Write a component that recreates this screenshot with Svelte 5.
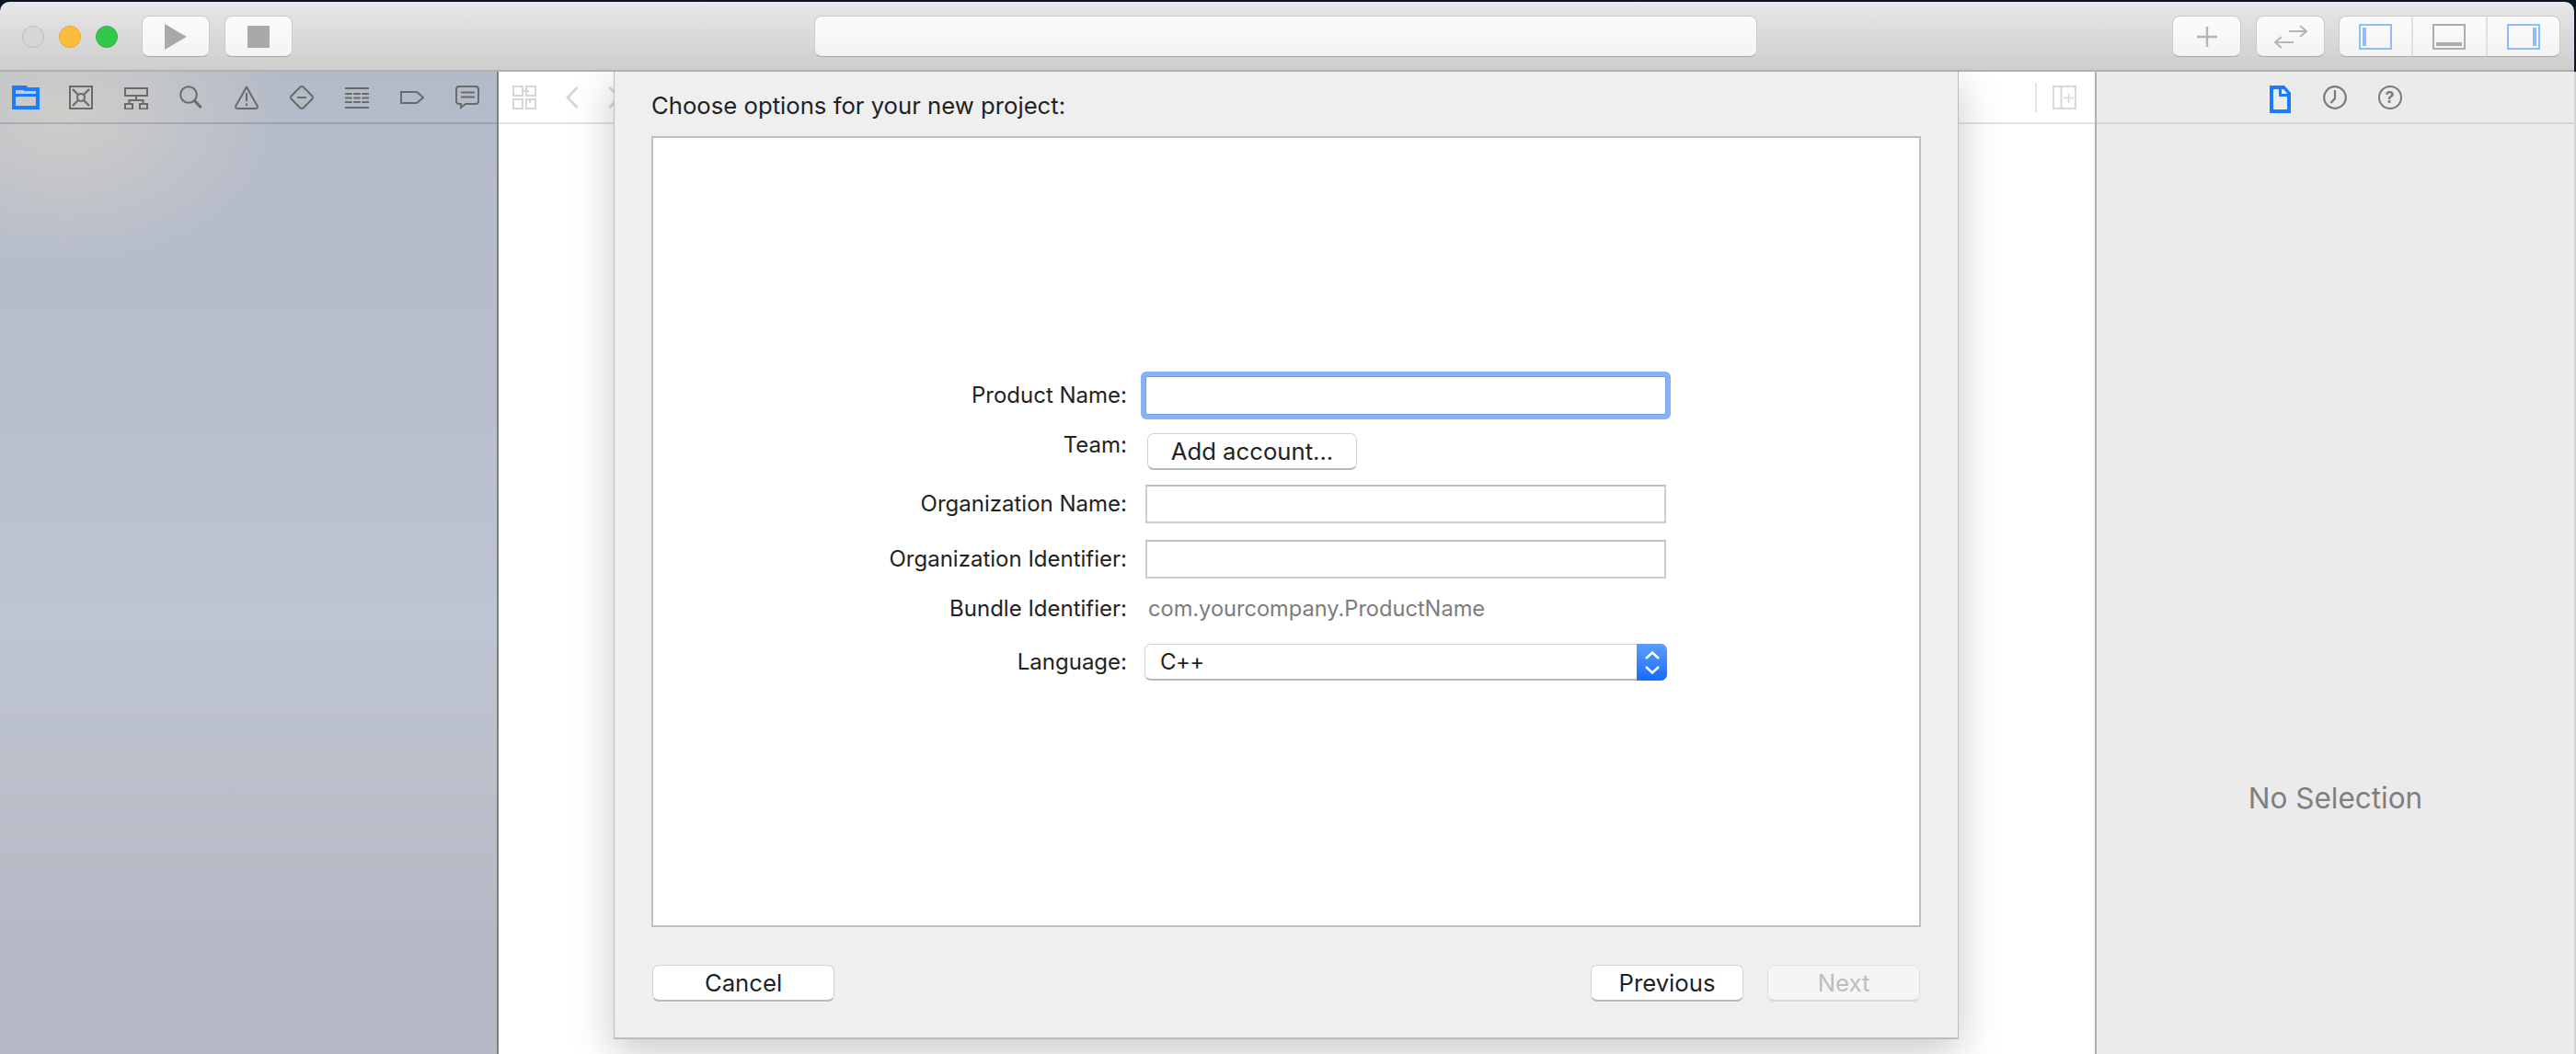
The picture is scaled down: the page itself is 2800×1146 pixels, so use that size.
<script>
  const rows = [
    { label: 'Organization Name:' },
    { label: 'Organization Identifier:' }
  ];
</script>

<div class="app">
  <div class="window">
    <header class="toolbar">
      <div class="lights">
        <span class="light gray"></span>
        <span class="light yellow"></span>
        <span class="light green"></span>
      </div>
      <button class="tb run"><svg width="24" height="28" viewBox="0 0 24 28"><path d="M0 0L24 14L0 28Z" fill="#a9a9a9"/></svg></button>
      <button class="tb stop"><svg width="24" height="24" viewBox="0 0 24 24"><rect width="24" height="24" fill="#a9a9a9"/></svg></button>
      <div class="tb activity"></div>
      <button class="tb add"><svg width="22" height="22" viewBox="0 0 22 22"><path d="M11 0V22M0 11H22" stroke="#b5b5b5" stroke-width="2.4" fill="none"/></svg></button>
      <button class="tb swap"><svg width="36" height="26" viewBox="0 0 36 26" fill="none" stroke="#b5b5b5" stroke-width="2"><path d="M16 7H34M28 1L35 7L28 13M21 19H2M8 13L1 19L8 25"/></svg></button>
      <div class="tb group">
        <span class="seg"><svg width="36" height="28" viewBox="0 0 36 28"><rect x="1" y="1" width="34" height="26" fill="none" stroke="#8dbdfb" stroke-width="2"/><rect x="4" y="4" width="4" height="20" fill="#8dbdfb"/></svg></span>
        <span class="seg"><svg width="36" height="28" viewBox="0 0 36 28"><rect x="1" y="1" width="34" height="26" fill="none" stroke="#adadad" stroke-width="2"/><rect x="4" y="20" width="28" height="4" fill="#adadad"/></svg></span>
        <span class="seg"><svg width="36" height="28" viewBox="0 0 36 28"><rect x="1" y="1" width="34" height="26" fill="none" stroke="#8dbdfb" stroke-width="2"/><rect x="28" y="4" width="4" height="20" fill="#8dbdfb"/></svg></span>
      </div>
    </header>

    <main class="main">
      <aside class="sidebar">
        <nav class="tabs nav-tabs">
          <svg class="folder" width="30" height="26" viewBox="0 0 30 26"><path fill="#1b7cff" fill-rule="evenodd" d="M0 0H16L17 2H30V26H0ZM4 6V9H26V6H13L12 5H4ZM4 12V22H26V12Z"/><path fill="#c3c9d6" d="M4 5H12L13 6H26V9H4Z"/></svg>
          <svg width="26" height="26" viewBox="0 0 26 26" fill="none" stroke="#6a6a6a" stroke-width="2"><rect x="1" y="1" width="24" height="24"/><circle cx="13" cy="13" r="4"/><path d="M4 4L10 10M22 4L16 10M4 22L10 16M22 22L16 16" stroke-width="2.2"/></svg>
          <svg width="26" height="26" viewBox="0 0 26 26" fill="none" stroke="#6a6a6a" stroke-width="2"><rect x="1" y="3" width="24" height="8"/><path d="M13 11V16M5.500 20V16H20.500V20"/><rect x="1" y="20" width="8" height="5.500"/><rect x="17" y="20" width="8" height="5.500"/></svg>
          <svg width="26" height="26" viewBox="0 0 26 26" fill="none" stroke="#6a6a6a" stroke-width="2"><circle cx="10" cy="10" r="8.800"/><path d="M16 16L23.500 24" stroke-width="3"/></svg>
          <svg width="26" height="26" viewBox="0 0 26 26" fill="none" stroke="#6a6a6a" stroke-width="2"><path d="M13 1.500L24.800 22.500Q25 25 23 25H3Q1 25 1.200 22.500Z" stroke-linejoin="round"/><path d="M13 8V17M13 19.500V22"/></svg>
          <svg width="26" height="26" viewBox="0 0 26 26" fill="none" stroke="#6a6a6a" stroke-width="2"><path d="M11 2Q13 0 15 2L24 11Q26 13 24 15L15 24Q13 26 11 24L2 15Q0 13 2 11Z"/><path d="M8 13H18"/></svg>
          <svg width="26" height="26" viewBox="0 0 26 26" fill="none" stroke="#6a6a6a" stroke-width="2"><path d="M0 3H26M0 9H26M0 13.500H26M0 18H26M0 24H26"/><path d="M8.500 7.500V19.500M17.500 7.500V19.500" stroke="#b9c0cd" stroke-width="1.500"/></svg>
          <svg width="26" height="26" viewBox="0 0 26 26" fill="none" stroke="#6a6a6a" stroke-width="2"><path d="M1 7H18L25 13L18 19H1Z"/></svg>
          <svg width="26" height="26" viewBox="0 0 26 26" fill="none" stroke="#6a6a6a" stroke-width="2"><path d="M4 1H22Q25 1 25 4V17Q25 20 22 20H11L6 24V20H4Q1 20 1 17V4Q1 1 4 1Z"/><path d="M6 7.500H21M6 12.500H21"/></svg>
        </nav>
      </aside>

      <section class="editor">
        <div class="editor-bar">
          <svg width="26" height="26" viewBox="0 0 26 26" fill="none" stroke="#d6d6d6" stroke-width="2"><rect x="1" y="1" width="10" height="10"/><rect x="15" y="1" width="10" height="10"/><rect x="1" y="15" width="10" height="10"/><rect x="15" y="15" width="10" height="10"/><path d="M11 6H18M19 15V19"/></svg>
          <svg class="chev" width="14" height="24" viewBox="0 0 14 24" fill="none" stroke="#d8d8d8" stroke-width="3"><path d="M12.500 1L2 12L12.500 23"/></svg>
          <svg class="chev next" width="14" height="24" viewBox="0 0 14 24" fill="none" stroke="#d8d8d8" stroke-width="3"><path d="M1.500 1L12 12L1.500 23"/></svg>
          <span class="grow"></span>
          <span class="sep"></span>
          <svg width="26" height="26" viewBox="0 0 26 26" fill="none" stroke="#d8d8d8" stroke-width="2"><rect x="1" y="1" width="24" height="24"/><path d="M9.500 1V25"/><path d="M12 13.500H23M17.500 8.500V19" stroke-width="1.600"/></svg>
        </div>

        <div class="dialog">
          <h1 class="title">Choose options for your new project:</h1>
          <div class="box">
            <div class="form">
              <div class="row r-product">
                <span class="label">Product Name:</span>
                <span class="field focus"></span>
              </div>
              <div class="row r-team">
                <span class="label team">Team:</span>
                <button class="btn add-account">Add account...</button>
              </div>
              {#each rows as row}
                <div class="row r-text">
                  <span class="label">{row.label}</span>
                  <span class="field"></span>
                </div>
              {/each}
              <div class="row r-bundle">
                <span class="label">Bundle Identifier:</span>
                <span class="bundle">com.yourcompany.ProductName</span>
              </div>
              <div class="row r-lang">
                <span class="label">Language:</span>
                <div class="popup">
                  <span class="popup-value">C++</span>
                  <span class="stepper">
                    <svg width="16" height="25" viewBox="0 0 16 25" fill="none" stroke="#fff" stroke-width="2.500"><path d="M1 8L8 1.500L15 8M1 17L8 23.500L15 17"/></svg>
                  </span>
                </div>
              </div>
            </div>
          </div>
          <footer class="footer">
            <button class="btn cancel">Cancel</button>
            <button class="btn previous">Previous</button>
            <button class="btn next-btn" disabled>Next</button>
          </footer>
        </div>
      </section>

      <aside class="inspector">
        <div class="tabs insp-tabs">
          <svg width="24" height="30" viewBox="0 0 24 30"><path fill="#1b7cff" fill-rule="evenodd" d="M0 0H16L23 8V30H0ZM4 4V26H19V12H10V4ZM13 4V9H19V8.500L15 4Z"/></svg>
          <svg width="26" height="26" viewBox="0 0 26 26" fill="none" stroke="#7a7a7a" stroke-width="2.200"><circle cx="13" cy="13" r="11.800"/><path d="M13 5V14L8.500 19"/></svg>
          <span class="help">?</span>
        </div>
        <div class="no-sel">No Selection</div>
      </aside>
    </main>
  </div>
</div>

<style>
  :global(body) { margin: 0; }
  .app {
    width: 2800px;
    height: 1146px;
    background: #0a1424;
    overflow: hidden;
    font-family: Inter, "Liberation Sans", sans-serif;
    color: #222;
    padding-top: 2px;
    box-sizing: border-box;
  }
  .window { display: flex; flex-direction: column; height: 1144px; }
  .toolbar {
    width: 2798px;
    height: 76px;
    box-sizing: border-box;
    display: flex;
    align-items: flex-start;
    padding: 15px 0 0 24px;
    border-radius: 10px 10px 0 0;
    border-bottom: 2px solid #b0b0b0;
    background: linear-gradient(#e7e7e7, #cdcdcd);
    flex: none;
  }
  .lights { display: flex; gap: 16px; margin-top: 11px; margin-right: 26px; }
  .light { width: 24px; height: 24px; border-radius: 50%; box-sizing: border-box; }
  .gray { background: #d6d6d6; border: 1px solid #bcbcbc; }
  .yellow { background: #febc3d; border: 1px solid #e0a532; }
  .green { background: #32c94b; border: 1px solid #2cb042; }
  .tb {
    height: 45px;
    box-sizing: border-box;
    padding: 0;
    border: 1px solid #cbcbcb;
    border-bottom-color: #a8a8a8;
    border-radius: 8px;
    background: linear-gradient(#fcfcfc, #f3f3f3);
    display: flex;
    align-items: center;
    justify-content: center;
  }
  .run { width: 74px; }
  .stop { width: 74px; margin-left: 16px; }
  .activity { width: 1025px; margin-left: 567px; }
  .add { width: 75px; margin-left: 451px; }
  .swap { width: 75px; margin-left: 16px; }
  .group { width: 241px; margin-left: 15px; }
  .seg {
    flex: 1;
    height: 100%;
    display: flex;
    align-items: center;
    justify-content: center;
    border-right: 2px solid #e0e0e0;
  }
  .seg:last-child { border-right: 0; }

  .main { flex: 1; display: flex; position: relative; overflow: hidden; }
  .tabs { height: 57px; box-sizing: border-box; border-bottom: 2px solid; display: flex; align-items: flex-start; padding-top: 15px; }
  .sidebar {
    width: 542px;
    flex: none;
    box-sizing: border-box;
    border-right: 2px solid #7b7f88;
    background:
      radial-gradient(ellipse 240px 165px at 70px 45px, rgba(208,206,202,.95), rgba(208,206,202,0)),
      linear-gradient(#b4bbc8, #b7bdca 30%, #bec5d2 56%, #bbc0cb 70%, #b3b8c4 92%, #b5bac6);
  }
  .nav-tabs { padding-left: 13px; gap: 34px; border-bottom-color: rgba(110,115,135,.35); }
  .folder { margin-right: -2px; }

  .editor { flex: 1; background: #fff; border-right: 2px solid #b0b0b0; }
  .editor-bar {
    height: 57px;
    box-sizing: border-box;
    border-bottom: 2px solid #e3e3e3;
    display: flex;
    align-items: flex-start;
    padding: 15px 20px 0 15px;
  }
  .chev { margin-left: 32px; margin-top: 1px; }
  .chev.next { margin-left: 32px; }
  .grow { flex: 1; }
  .sep { width: 2px; height: 32px; background: #e2e2e2; margin: -3px 17px 0 0; }

  .dialog {
    position: absolute;
    left: 667px;
    top: 0;
    width: 1462px;
    height: 1052px;
    box-sizing: border-box;
    background: #efefef;
    border: 1px solid #bdbdbd;
    border-top: 0;
    border-bottom-width: 2px;
    box-shadow: 0 14px 44px rgba(0, 0, 0, .22);
    padding: 0 40px;
    display: flex;
    flex-direction: column;
  }
  .title {
    margin: 0;
    height: 70px;
    font-size: 25.7px;
    font-weight: 400;
    line-height: 30px;
    padding-top: 22px;
    box-sizing: border-box;
  }
  .box {
    height: 860px;
    box-sizing: border-box;
    flex: none;
    background: #fff;
    border: 2px solid #bfbfbf;
    padding-top: 259px;
  }
  .form { display: flex; flex-direction: column; }
  .row { display: flex; align-items: center; }
  .label { width: 515px; text-align: right; font-size: 24px; line-height: 30px; flex: none; margin-right: 20px; }
  .r-product { height: 42px; }
  .r-team { height: 40px; margin-top: 20px; align-items: flex-start; }
  .r-text { height: 42px; margin-top: 16px; }
  .r-text + .r-text { margin-top: 18px; }
  .r-bundle { height: 30px; margin-top: 18px; }
  .r-lang { height: 40px; margin-top: 23px; }
  .team { line-height: 26px; }
  .field {
    width: 566px;
    height: 42px;
    box-sizing: border-box;
    background: #fff;
    border: 2px solid #cdcdcd;
    border-top-color: #c0c0c0;
  }
  .focus { border: 1px solid #6c9fec; box-shadow: 0 0 0 5px #86b2f6; border-radius: 2px; }
  .btn {
    font: inherit;
    font-size: 25.7px;
    color: #222;
    background: #fff;
    box-sizing: border-box;
    height: 40px;
    border: 1px solid #d2d2d2;
    border-bottom: 2px solid #b8b8b8;
    border-radius: 7px;
    padding: 0;
  }
  .add-account { width: 228px; margin-left: 2px; }
  .bundle { font-size: 23.6px; color: #7c7c7c; margin-left: 3px; line-height: 30px; }
  .popup {
    width: 568px;
    height: 40px;
    margin-left: -1px;
    box-sizing: border-box;
    background: #fff;
    border: 1px solid #d2d2d2;
    border-bottom: 2px solid #b8b8b8;
    border-radius: 7px;
    display: flex;
    align-items: center;
    justify-content: space-between;
    position: relative;
  }
  .popup-value { font-size: 24px; margin-left: 16px; letter-spacing: -0.6px; }
  .stepper {
    width: 33px;
    height: 40px;
    margin: -1px -1px -2px 0;
    border-radius: 0 7px 7px 0;
    background: linear-gradient(#5d9cfd, #176cfd);
    display: flex;
    align-items: center;
    justify-content: center;
  }
  .footer { display: flex; margin-top: 41px; padding-left: 1px; padding-right: 1px; gap: 26px; }
  .cancel { width: 198px; margin-right: auto; }
  .previous { width: 166px; }
  .next-btn {
    width: 166px;
    background: #f5f5f5;
    color: #bdbdbd;
    border-color: #e0e0e0;
    border-bottom: 2px solid #d8d8d8;
  }

  .inspector {
    width: 521px;
    flex: none;
    background: #ebebeb;
    box-sizing: border-box;
    display: flex;
    flex-direction: column;
    border-right: 2px solid #d4d4d4;
  }
  .insp-tabs { justify-content: center; gap: 34px; border-bottom-color: #d4d4d4; }
  .help {
    width: 26px;
    height: 26px;
    box-sizing: border-box;
    border: 2.2px solid #7a7a7a;
    border-radius: 50%;
    color: #7a7a7a;
    font-size: 18px;
    font-weight: 700;
    line-height: 22px;
    text-align: center;
  }
  .no-sel {
    flex: 1;
    display: flex;
    align-items: center;
    justify-content: center;
    padding-top: 454px;
    font-size: 31.5px;
    color: #7f7f7f;
  }
</style>
